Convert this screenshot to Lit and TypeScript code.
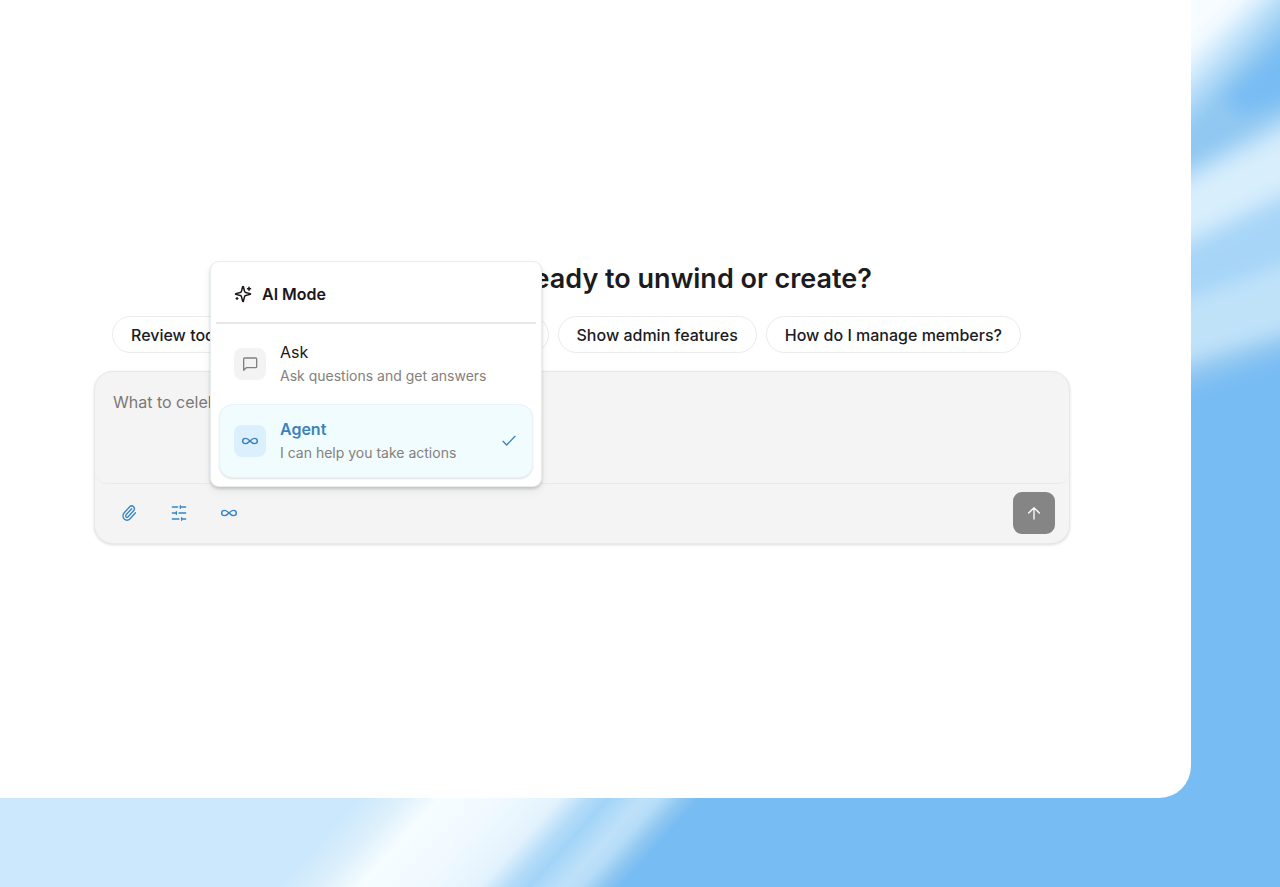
import { LitElement, html, css, svg } from "lit";
import { customElement, property, state } from "lit/decorators.js";
import { classMap } from "lit/directives/class-map.js";

const icons = {
  sparkles: svg`<path d="M9.937 15.5A2 2 0 0 0 8.5 14.063l-6.135-1.582a.5.5 0 0 1 0-.962L8.5 9.936A2 2 0 0 0 9.937 8.5l1.582-6.135a.5.5 0 0 1 .963 0L14.063 8.5A2 2 0 0 0 15.5 9.937l6.135 1.581a.5.5 0 0 1 0 .964L15.5 14.063a2 2 0 0 0-1.437 1.437l-1.582 6.135a.5.5 0 0 1-.963 0z"/><path d="M20 3v4M22 5h-4M4 17v2M5 18H3"/>`,
  message: svg`<path d="M22 16a1.500 1.500 0 0 1-1.500 1.500H6.500L2.500 21.500V4.500A1.500 1.500 0 0 1 4 3H20.500A1.500 1.500 0 0 1 22 4.500z"/>`,
  infinity: svg`<path transform="translate(12 12) scale(1.1 1) translate(-12 -12)" d="M6 16c5 0 7-8 12-8a4 4 0 0 1 0 8c-5 0-7-8-12-8a4 4 0 1 0 0 8"/>`,
  check: svg`<path d="M21 5 8.500 18 3 12.500"/>`,
  paperclip: svg`<path transform="translate(12 12) scale(1 1.08) translate(-12 -12)" d="m16 6-8.414 8.586a2 2 0 0 0 2.829 2.829l8.414-8.586a4 4 0 1 0-5.657-5.657l-8.379 8.551a6 6 0 1 0 8.485 8.485l8.379-8.551"/>`,
  sliders: svg`<path d="M22 3h-8M10 3H2M22 12H12M8 12H2M22 21h-6M12 21H2M14 1v4M8 10v4M16 19v4"/>`,
  arrowUp: svg`<path d="m4 12 8-8 8 8M12 21V4"/>`,
};

@customElement("ui-icon")
class UiIcon extends LitElement {
  @property() name: keyof typeof icons = "check";

  static styles = css`
    :host { display: block; width: 18px; height: 18px; flex: none; }
    svg {
      display: block; width: 100%; height: 100%; overflow: visible; fill: none; stroke: currentColor;
      stroke-width: var(--icon-stroke, 2); stroke-linecap: round; stroke-linejoin: round;
    }
  `;

  render() {
    return html`<svg viewBox="0 0 24 24" aria-hidden="true">${icons[this.name]}</svg>`;
  }
}

@customElement("sky-wallpaper")
class SkyWallpaper extends LitElement {
  static styles = css`
    :host { display: block; overflow: hidden; background: #78bcf4; }
    svg { display: block; width: 100%; height: 100%; }
  `;

  render() {
    return html`<svg viewBox="0 0 1280 887" preserveAspectRatio="none" aria-hidden="true">
      <defs>
        <linearGradient id="beams" gradientUnits="userSpaceOnUse" x1="0" y1="798" x2="387" y2="1146">
          <stop offset="0" stop-color="#cbe8fc"/>
          <stop offset=".51" stop-color="#cbe8fc"/>
          <stop offset=".57" stop-color="#dceffb"/>
          <stop offset=".63" stop-color="#f6fdff"/>
          <stop offset=".7" stop-color="#f2faff"/>
          <stop offset=".76" stop-color="#e9f6fe"/>
          <stop offset=".8" stop-color="#e2f2fd"/>
          <stop offset=".84" stop-color="#b5dcf9"/>
          <stop offset=".87" stop-color="#a2d4f7"/>
          <stop offset=".895" stop-color="#b2dbf9"/>
          <stop offset=".92" stop-color="#bee1f8"/>
          <stop offset=".945" stop-color="#b5dcf8"/>
          <stop offset=".975" stop-color="#8fc7f0"/>
          <stop offset="1" stop-color="#78bcf4"/>
        </linearGradient>
        <filter id="soft" x="-50%" y="-50%" width="200%" height="200%">
          <feGaussianBlur stdDeviation="9"/>
        </filter>
      </defs>
      <rect y="780" width="1280" height="107" fill="url(#beams)"/>
      <g filter="url(#soft)">
        <path d="M1130 -60H1340V-10L1280 45L1225 95L1240 115L1340 85V200H1130Z" fill="#90c8f1"/>
        <path d="M1130 -60H1340V-35L1280 20L1191 116L1130 170Z" fill="#aed9f8"/>
        <path d="M1130 -60H1325V-50L1277 -3L1191 88L1130 146Z" fill="#d2ebfc"/>
        <path d="M1130 -60H1300V-50L1250 0L1191 60L1130 122Z" fill="#f6fcff"/>
        <path d="M1130 196L1191 168L1280 119L1340 95V190L1280 212L1191 250L1130 275Z" fill="#b8def9"/>
        <path d="M1130 212L1191 182L1280 136L1340 112V172L1280 192L1191 236L1130 262Z" fill="#d8eefc"/>
        <path d="M1130 275L1191 248L1280 206L1340 184V270L1280 282L1191 310L1130 325Z" fill="#a6d5f8"/>
        <path d="M1130 350L1191 330L1280 300L1340 288V340L1280 355L1191 384L1130 400Z" fill="#92c8f1"/>
        <path d="M1130 320L1191 298L1280 266L1340 252V322L1280 334L1191 362L1130 380Z" fill="#bfe2f9"/>
      </g>
    </svg>`;
  }
}

interface Mode {
  id: string;
  title: string;
  detail: string;
  icon: keyof typeof icons;
}

const modes: Mode[] = [
  { id: "ask", title: "Ask", detail: "Ask questions and get answers", icon: "message" },
  { id: "agent", title: "Agent", detail: "I can help you take actions", icon: "infinity" },
];

@customElement("mode-menu")
class ModeMenu extends LitElement {
  @state() selected = "agent";

  static styles = css`
    :host {
      display: block; box-sizing: border-box; padding: 0 5px 8px;
      border: 1px solid #e6eeef; border-radius: 9px; background: #fff;
      box-shadow: 0 2px 3px rgba(60, 50, 40, .2), 0 4px 10px rgba(0, 0, 0, .06);
    }
    .title {
      display: flex; align-items: center; gap: 10px; margin: 0; padding: 20px 18px 16px;
      border-bottom: 2px solid #e8e8e8; font-size: 16px; line-height: 24px; font-weight: 600; color: #1b1719;
    }
    .list { display: flex; flex-direction: column; gap: 3px; padding: 3px 3px 0; }
    .item {
      display: flex; align-items: center; gap: 14px; padding: 12px 15px 12px 14px;
      border: 1px solid transparent; border-radius: 14px; background: none;
      font: inherit; color: #1b1719; text-align: left; cursor: pointer;
    }
    .item.on { border-color: #e6f5fa; background: #f1fcff; box-shadow: 0 1px 2px rgba(0, 0, 0, .12); }
    .tile {
      display: grid; place-items: center; width: 32px; height: 32px; flex: none;
      border-radius: 8px; background: #f3f3f3; color: #85807c;
    }
    .on .tile { background: #dceffc; color: #3b82bd; }
    .tile ui-icon { width: 16px; height: 16px; }
    .words { flex: 1; display: flex; flex-direction: column; }
    .name { font-size: 16px; line-height: 24px; }
    .on .name { font-weight: 600; color: #3b82bd; }
    .detail { font-size: 14px; line-height: 24px; color: #85807c; }
    .tick { width: 16px; height: 16px; color: #3b82bd; }
  `;

  render() {
    return html`
      <h2 class="title"><ui-icon name="sparkles"></ui-icon>AI Mode</h2>
      <div class="list" role="menu" aria-label="AI Mode">
        ${modes.map((m) => {
          const on = m.id === this.selected;
          return html`<button class=${classMap({ item: true, on })} role="menuitemradio"
            aria-checked=${on ? "true" : "false"} @click=${() => (this.selected = m.id)}>
            <span class="tile"><ui-icon name=${m.icon}></ui-icon></span>
            <span class="words"><span class="name">${m.title}</span><span class="detail">${m.detail}</span></span>
            ${on ? html`<ui-icon class="tick" name="check"></ui-icon>` : null}
          </button>`;
        })}
      </div>`;
  }
}

@customElement("app-root")
class AppRoot extends LitElement {
  static styles = css`
    :host {
      display: grid; grid-template: minmax(100vh, auto) / minmax(0, 1fr);
      font-family: Inter, "Liberation Sans", sans-serif; color: #1b1b22;
    }
    .wallpaper, .panel { grid-area: 1 / 1; }
    .panel {
      z-index: 1; display: flex; flex-direction: column; justify-content: center;
      box-sizing: border-box; margin: 0 89px 89px 0; padding: 7px 121px 0 94px;
      border-radius: 0 0 32px 0; background: #fff;
    }
    .greeting { margin: 0; padding-right: 198px; text-align: right; font-size: 27px; line-height: 36px; font-weight: 600; }
    .chips { display: flex; gap: 9px; margin-top: 19px; padding: 0 49px 0 18px; }
    .chip {
      box-sizing: border-box; height: 37px; padding: 0 18px; border: 1px solid #e9ebec; border-radius: 19px;
      background: #fff; font: inherit; font-size: 16px; font-weight: 500; color: #1b1b22; white-space: nowrap;
    }
    .chip.wide { flex: 1; }
    .composer {
      position: relative; margin-top: 18px; border: 1px solid #e8e8e8; border-radius: 19px;
      background: #f4f4f4; box-shadow: 0 1px 3px rgba(0, 0, 0, .14);
    }
    .prompt {
      display: block; box-sizing: border-box; width: 100%; height: 112px; padding: 18px; resize: none;
      border: 0; border-bottom: 1px solid #eaeaea; border-radius: 18px 18px 12px 12px; outline: 0;
      background: transparent; font: inherit; font-size: 16px; line-height: 24px; color: #1b1b22;
    }
    .prompt::placeholder { color: #7c7874; opacity: 1; }
    .bar { display: flex; align-items: center; gap: 14px; padding: 8px 14px 9px 16px; }
    .tool {
      display: grid; place-items: center; width: 36px; height: 36px; padding: 0; border: 0;
      background: none; color: #3585c8; --icon-stroke: 2;
    }
    .tool ui-icon { width: 16px; height: 16px; }
    .send {
      display: grid; place-items: center; width: 42px; height: 42px; margin-left: auto; padding: 0;
      border: 0; border-radius: 9px; background: #858585; color: #fff;
    }
    .send ui-icon { width: 16px; height: 16px; }
    .menu { position: absolute; left: 115px; bottom: 56px; width: 332px; }
  `;

  render() {
    return html`
      <sky-wallpaper class="wallpaper"></sky-wallpaper>
      <main class="panel">
        <h1 class="greeting">Ready to unwind or create?</h1>
        <div class="chips">
          <button class="chip">Review today's tasks</button>
          <button class="chip wide">Plan my week</button>
          <button class="chip">Show admin features</button>
          <button class="chip">How do I manage members?</button>
        </div>
        <form class="composer" @submit=${(e: Event) => e.preventDefault()}>
          <textarea class="prompt" aria-label="Message" placeholder="What to celebrate today?"></textarea>
          <div class="bar">
            <button class="tool" type="button" aria-label="Attach file"><ui-icon name="paperclip"></ui-icon></button>
            <button class="tool" type="button" aria-label="Settings"><ui-icon name="sliders"></ui-icon></button>
            <button class="tool" type="button" aria-label="AI mode"><ui-icon name="infinity"></ui-icon></button>
            <button class="send" aria-label="Send"><ui-icon name="arrowUp"></ui-icon></button>
          </div>
          <mode-menu class="menu"></mode-menu>
        </form>
      </main>`;
  }
}
